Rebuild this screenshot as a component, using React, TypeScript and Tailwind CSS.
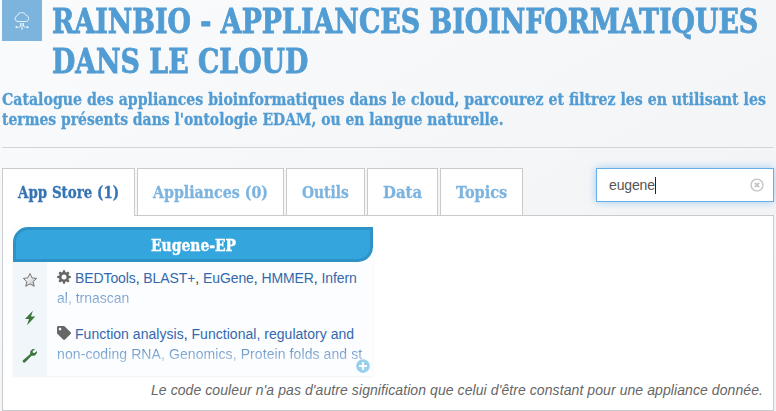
import { useLayoutEffect, useRef, useState } from "react";
import type { ReactNode } from "react";
import { FaPlusCircle, FaTag } from "react-icons/fa";

/** A single line of slab-serif text condensed to the given width. */
function Slab({ children, width, className = "" }: { children: string; width: number; className?: string }) {
  const ref = useRef<HTMLSpanElement>(null);
  const [scale, setScale] = useState(1);
  useLayoutEffect(() => {
    if (ref.current) setScale(width / ref.current.offsetWidth);
  }, [width]);
  return (
    <span className={`block whitespace-nowrap font-['DejaVu_Serif_Condensed','DejaVu_Serif',serif] font-bold ${className}`} style={{ width }}>
      <span ref={ref} className="inline-block origin-left" style={{ transform: `scaleX(${scale})` }}>
        {children}
      </span>
    </span>
  );
}

function CloudIcon() {
  return (
    <svg viewBox="0 0 16 22" className="h-[22px] w-4" fill="none" stroke="#e6f2fa" strokeWidth="1">
      <path d="M4 11.500a2.900 2.900 0 0 1-.8-5.700A4.700 4.700 0 0 1 12 5.300a3.200 3.200 0 0 1 .5 6.200z" />
      <path d="M6.500 13v3.300l-2 1H2M9.500 13v3.300l2 1H14M8 13v6" />
      <path d="m3 15.500-2 1.800 2 1.200zM13 15.500l2 1.800-2 1.200zM7 18.500h2l-1 1.700z" fill="#e6f2fa" stroke="none" />
    </svg>
  );
}

function GearIcon() {
  return (
    <svg viewBox="0 0 14 14" className="size-3.5">
      <g fill="#666">
        {[0, 45, 90, 135].map((a) => (
          <path key={a} d="M5.500 3 6 .2h2L8.500 3v8L8 13.800H6L5.500 11z" transform={`rotate(${a} 7 7)`} />
        ))}
        <circle cx="7" cy="7" r="5" />
      </g>
      <circle cx="7" cy="7" r="2.500" fill="#fcfdff" />
    </svg>
  );
}

function StarIcon() {
  return (
    <svg viewBox="0 0 16 16" className="size-4">
      <defs>
        <linearGradient id="star" x1="0" y1="0" x2="1" y2="1">
          <stop offset="0.3" stopColor="#fafafa" />
          <stop offset="1" stopColor="#b0b0b0" />
        </linearGradient>
      </defs>
      <path d="m8 1.500 2 4.400 4.700.5-3.500 3.200 1 4.700L8 11.900l-4.200 2.400 1-4.700-3.500-3.200L6 5.900z" fill="url(#star)" stroke="#777" />
    </svg>
  );
}

function BoltIcon() {
  return (
    <svg viewBox="0 0 14 16" className="h-4 w-3.5" fill="#3c763d">
      <path d="M9.800.8 2 8.900h4L4 15.200l8.300-8.700H8z" />
    </svg>
  );
}

function WrenchIcon() {
  return (
    <svg viewBox="0 0 16 16" className="size-4" fill="#3c763d">
      <path d="M13.200 1C10.400.4 7.800 2.400 8.300 5.100c.1.700-.1 1-.6 1.400L1.300 11.900c-.8.700-.9 1.700-.2 2.400.7.700 1.700.6 2.400-.2L9.100 8.200c.4-.5.700-.6 1.400-.5C13.300 8 15.500 5.500 14.900 2.900l-2.400 2.200-1.600-.4-.3-1.500z" />
    </svg>
  );
}

function Tab({ label, width, active = false }: { label: string; width: number; active?: boolean }) {
  return (
    <div className={`flex h-12 items-center border border-[#c8cacc] bg-white px-[15px] ${active ? "border-b-0 pb-px text-[#3474b3]" : "text-[#7db4df]"}`}>
      <Slab width={width} className="text-[17px] leading-6 [-webkit-text-stroke:0.3px]">{label}</Slab>
    </div>
  );
}

function Line({ children, faded = false, className = "" }: { children: ReactNode; faded?: boolean; className?: string }) {
  return (
    <div className={`flex h-5 items-center whitespace-pre ${faded ? "bg-linear-to-b from-[#4a80bd] to-[#b4cbe4] bg-clip-text text-transparent" : "text-[#3369ac]"} ${className}`}>
      {children}
    </div>
  );
}

function Links({ items }: { items: string[] }) {
  return (
    <span>
      {items.map((item, i) => (
        <span key={item}>
          {item}
          {i < items.length - 1 && <span className="text-[#333]">, </span>}
        </span>
      ))}
    </span>
  );
}

export default function App() {
  return (
    <div className="h-[411px] w-[776px] overflow-hidden bg-linear-to-br from-[#fafbfc] via-[#f5f6f8] to-[#f1f2f4] pl-0.5 font-['Liberation_Sans',Arial,sans-serif] text-sm">
      <header className="h-[148px] w-[772px] border-b border-[#d3d6d8] text-[#519cd3]">
        <div className="flex h-[87px] gap-[10px]">
          <div className="flex h-[41px] w-10 items-center justify-center bg-[#7db4de]">
            <CloudIcon />
          </div>
          <h1 className="pt-px [-webkit-text-stroke:0.8px]">
            <Slab width={706} className="text-[34px] leading-10">RAINBIO - APPLIANCES BIOINFORMATIQUES</Slab>
            <Slab width={256} className="text-[34px] leading-10">DANS LE CLOUD</Slab>
          </h1>
        </div>
        <h2 className="pt-0.5 [-webkit-text-stroke:0.3px]">
          <Slab width={764} className="h-5 text-[17px] leading-5">Catalogue des appliances bioinformatiques dans le cloud, parcourez et filtrez les en utilisant les</Slab>
          <Slab width={502} className="h-5 text-[17px] leading-5">termes présents dans l'ontologie EDAM, ou en langue naturelle.</Slab>
        </h2>
      </header>

      <div className="mt-5 flex h-[47px] w-[772px] items-start justify-between">
        <nav className="relative z-10 flex gap-0.5">
          <Tab label="App Store (1)" width={101} active />
          <Tab label="Appliances (0)" width={115} />
          <Tab label="Outils" width={47} />
          <Tab label="Data" width={39} />
          <Tab label="Topics" width={51} />
        </nav>
        <div className="flex h-[34px] w-[178px] items-center justify-between border border-[#66afe9] bg-white pr-[9px] pl-3 text-[#555] shadow-[0_0_8px_rgba(102,175,233,0.6)]">
          <span className="flex items-center tracking-[-0.15px]">
            eugene<i className="h-[17px] w-px bg-[#222]" />
          </span>
          <svg viewBox="0 0 14 14" className="size-3.5" fill="none" stroke="#c4c4c4">
            <circle cx="7" cy="7" r="5.900" strokeWidth="1.400" />
            <path d="m4.900 4.900 4.200 4.200m0-4.200L4.900 9.100" strokeWidth="2" />
          </svg>
        </div>
      </div>

      <main className="h-[196px] w-[772px] border border-[#c8cacc] bg-white pt-[11px] pl-2.5">
        <article className="relative h-[149px] w-[360px] bg-[#fcfdff] shadow-[0_1px_2px_rgba(0,0,0,0.06)]">
          <h3 className="flex h-[35px] items-center justify-center rounded-tl-[15px] rounded-br-[15px] border-3 border-[#2e92c6] bg-[#34a5dd] pt-0.5 text-white">
            <Slab width={85} className="text-[16px] leading-6 [-webkit-text-stroke:0.4px]">Eugene-EP</Slab>
          </h3>
          <div className="flex h-[114px]">
            <aside className="flex w-[34px] flex-col items-center gap-[22px] bg-[#f1f6fb] pt-2.5">
              <StarIcon />
              <BoltIcon />
              <WrenchIcon />
            </aside>
            <div className="pt-1.5 pl-2.5">
              <Line className="tracking-[-0.09px]">
                <span className="mr-1 pb-0.5"><GearIcon /></span>
                <Links items={["BEDTools", "BLAST+", "EuGene", "HMMER", "Infern"]} />
              </Line>
              <Line faded>al, trnascan</Line>
              <div className="h-4" />
              <Line className="tracking-[0.03px]">
                <FaTag className="mr-1 mb-0.5 size-3.5 text-[#666]" />
                <Links items={["Function analysis", "Functional, regulatory and"]} />
              </Line>
              <Line faded className="tracking-[0.09px]">non-coding RNA, Genomics, Protein folds and st</Line>
            </div>
          </div>
          <FaPlusCircle className="absolute right-[3px] bottom-[3px] size-3.5 text-[#97d0ed]" />
        </article>
        <p className="mt-1 pr-2.5 text-right text-[14px] leading-5 tracking-[0.08px] text-[#666] italic">
          Le code couleur n'a pas d'autre signification que celui d'être constant pour une appliance donnée.
        </p>
      </main>
    </div>
  );
}
